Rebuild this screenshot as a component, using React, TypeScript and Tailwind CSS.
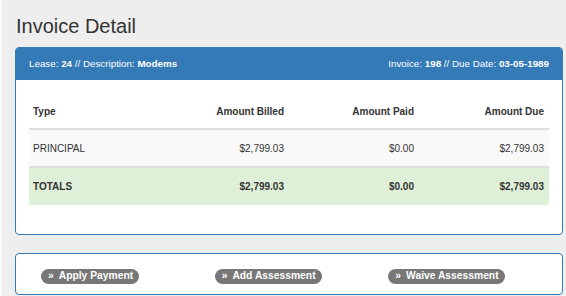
import React from "react";

const rows = [
  { type: "PRINCIPAL", billed: "$2,799.03", paid: "$0.00", due: "$2,799.03" },
];

function Btn({ label }: { label: string }) {
  return (
    <div>
      <span className="inline-flex h-[15px] items-center rounded-full bg-[#777777] pl-[7px] pr-[6px] text-[10.3px] font-bold leading-none text-white">
        <span className="mr-[5px]">»</span>
        {label}
      </span>
    </div>
  );
}

export default function App() {
  return (
    <div
      className="flex h-[296px] w-[566px] overflow-hidden bg-[#eeeeee] text-[#333333]"
      style={{ fontFamily: '"Liberation Sans", Arial, sans-serif' }}
    >
      <div className="w-[2px] shrink-0 bg-[#f8f8f8]" />
      <div className="flex w-[561px] shrink-0 flex-col pl-[13px] pt-[15px]">
        <h1 className="pl-[1px] text-[20px] font-normal leading-[22px] text-[#333333]">Invoice Detail</h1>
        <div className="mt-[10px] h-[188px] overflow-hidden rounded-[4px] border border-[#337ab7] bg-white">
          <div className="flex h-[32px] items-center justify-between bg-[#337ab7] px-[13px] text-[9.8px] text-white">
            <div>
              Lease: <b>24</b> // Description: <b>Modems</b>
            </div>
            <div>
              Invoice: <b>198</b> // Due Date: <b>03-05-1989</b>
            </div>
          </div>
          <div className="px-[13px] pt-[15px]">
            <div className="text-[10px]">
              <div className="grid h-[35px] grid-cols-4 items-center border-b-2 border-[#dddddd] font-bold">
                <div className="px-[4px]">Type</div>
                <div className="px-[5px] text-right">Amount Billed</div>
                <div className="px-[5px] text-right">Amount Paid</div>
                <div className="px-[5px] text-right">Amount Due</div>
              </div>
              {rows.map((r) => (
                <div
                  key={r.type}
                  className="grid h-[38px] grid-cols-4 items-center border-b-2 border-[#dddddd] bg-[#f9f9f9]"
                >
                  <div className="px-[4px]">{r.type}</div>
                  <div className="px-[5px] text-right">{r.billed}</div>
                  <div className="px-[5px] text-right">{r.paid}</div>
                  <div className="px-[5px] text-right">{r.due}</div>
                </div>
              ))}
              <div className="grid h-[37px] grid-cols-4 items-center bg-[#dff0d8] font-bold">
                <div className="px-[4px]">TOTALS</div>
                <div className="px-[5px] text-right">$2,799.03</div>
                <div className="px-[5px] text-right">$0.00</div>
                <div className="px-[5px] text-right">$2,799.03</div>
              </div>
            </div>
          </div>
        </div>
        <div className="mt-[18px] grid h-[42px] grid-cols-3 items-center rounded-[4px] border border-[#337ab7] bg-white pl-[25px]">
          <Btn label="Apply Payment" />
          <Btn label="Add Assessment" />
          <Btn label="Waive Assessment" />
        </div>
      </div>
    </div>
  );
}
